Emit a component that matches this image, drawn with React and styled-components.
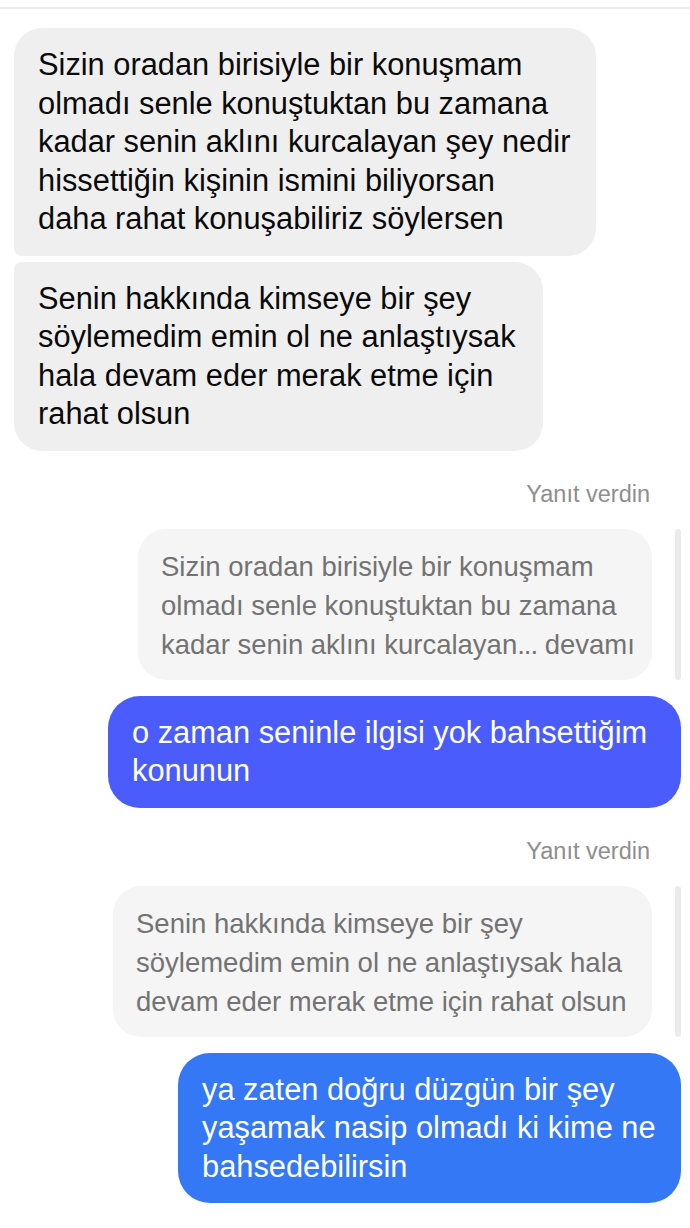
import React from "react";
import styled, { createGlobalStyle } from "styled-components";

const Global = createGlobalStyle`
  html, body { margin: 0; padding: 0; background: #ffffff; }
  body { font-family: "Liberation Sans", Arial, sans-serif; -webkit-font-smoothing: antialiased; }
`;

const Screen = styled.div`
  width: 690px;
  min-height: 1228px;
  background: #fff;
  display: flex;
  flex-direction: column;
`;

const TopRule = styled.div`
  margin-top: 7px;
  height: 2px;
  background: #ebebeb;
`;

const Thread = styled.div`
  display: flex;
  flex-direction: column;
  padding: 19px 9px 0 14px;
`;

const Bubble = styled.div`
  box-sizing: border-box;
  width: ${(p) => p.$w}px;
  padding: 18px 20px 17px 24px;
  font-size: 30.8px;
  line-height: 38.5px;
  color: #0a0a0a;
  white-space: nowrap;
  align-self: ${(p) => (p.$mine ? "flex-end" : "flex-start")};
  margin-top: ${(p) => p.$mt || 0}px;
  background: ${(p) => p.$bg || "#efefef"};
  border-radius: ${(p) => p.$r || "28px"};
  ${(p) => p.$mine && "color: #ffffff;"}
`;

const Meta = styled.div`
  align-self: flex-end;
  margin-top: ${(p) => p.$mt}px;
  margin-right: 31px;
  font-size: 23.5px;
  line-height: 24px;
  color: #8e8e8e;
`;

const QuoteRow = styled.div`
  display: flex;
  justify-content: flex-end;
  align-items: stretch;
  gap: 23px;
  margin-top: 23px;
`;

const Quote = styled.div`
  box-sizing: border-box;
  width: ${(p) => p.$w}px;
  padding: 18px 16px 16px 23px;
  background: #f5f5f5;
  border-radius: 28px;
  font-size: 27.5px;
  line-height: 39px;
  color: #737373;
  white-space: nowrap;
`;

const Ellipsis = styled.span`
  letter-spacing: -1px;
`;

const QuoteBar = styled.div`
  width: 6px;
  border-radius: 3px;
  background: #ebebeb;
`;

export default function App() {
  return (
    <Screen>
      <Global />
      <TopRule />
      <Thread>
        <Bubble $w={582} $r="28px 28px 28px 8px">
          Sizin oradan birisiyle bir konuşmam
          <br />
          olmadı senle konuştuktan bu zamana
          <br />
          kadar senin aklını kurcalayan şey nedir
          <br />
          hissettiğin kişinin ismini biliyorsan
          <br />
          daha rahat konuşabiliriz söylersen
        </Bubble>
        <Bubble $w={529} $mt={6} $r="8px 28px 28px 28px">
          Senin hakkında kimseye bir şey
          <br />
          söylemedim emin ol ne anlaştıysak
          <br />
          hala devam eder merak etme için
          <br />
          rahat olsun
        </Bubble>

        <Meta $mt={31}>Yanıt verdin</Meta>
        <QuoteRow>
          <Quote $w={514}>
            Sizin oradan birisiyle bir konuşmam
            <br />
            olmadı senle konuştuktan bu zamana
            <br />
            kadar senin aklını kurcalayan<Ellipsis>...</Ellipsis> devamı
          </Quote>
          <QuoteBar />
        </QuoteRow>
        <Bubble $mine $w={573} $mt={16} $bg="#4b5cfc" $r="32px">
          o zaman seninle ilgisi yok bahsettiğim
          <br />
          konunun
        </Bubble>

        <Meta $mt={31}>Yanıt verdin</Meta>
        <QuoteRow>
          <Quote $w={539}>
            Senin hakkında kimseye bir şey
            <br />
            söylemedim emin ol ne anlaştıysak hala
            <br />
            devam eder merak etme için rahat olsun
          </Quote>
          <QuoteBar />
        </QuoteRow>
        <Bubble $mine $w={503} $mt={16} $bg="#3478f6" $r="32px">
          ya zaten doğru düzgün bir şey
          <br />
          yaşamak nasip olmadı ki kime ne
          <br />
          bahsedebilirsin
        </Bubble>
      </Thread>
    </Screen>
  );
}
